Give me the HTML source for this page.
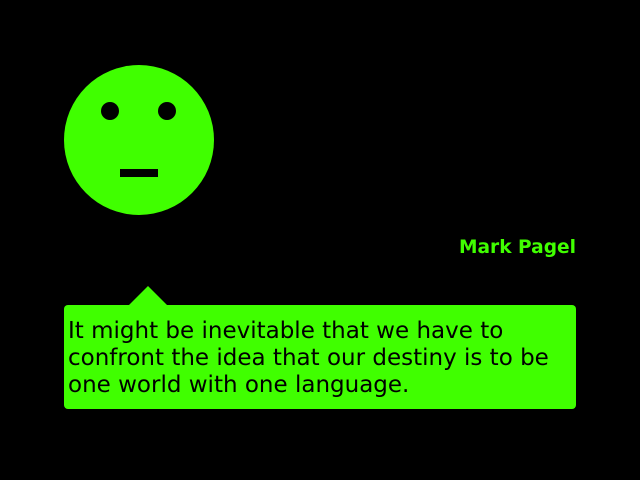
<!DOCTYPE html>
<html><head><style>
html,body{margin:0;padding:0;background:#000;width:640px;height:480px;overflow:hidden;position:relative;font-family:"DejaVu Sans","Liberation Sans",sans-serif}
.face{position:absolute;left:64px;top:65px;width:150px;height:150px;border-radius:50%;background:#40ff00}
.eye{position:absolute;width:18px;height:18px;border-radius:50%;background:#000;top:37px}
.mouth{position:absolute;left:56px;top:104px;width:38px;height:8px;background:#000}
.name{position:absolute;right:64px;top:235px;color:#40ff00;font-weight:bold;font-size:18.6px;line-height:26px}
.tri{position:absolute;left:129px;top:286px;width:0;height:0;border-left:19.5px solid transparent;border-right:19.5px solid transparent;border-bottom:19px solid #40ff00}
.bub{position:absolute;left:64px;top:305px;width:508px;height:104px;padding-left:4px;background:#40ff00;border-radius:4px;color:#000;font-size:23px;line-height:27px}
.bub div{padding-top:13px;white-space:nowrap}
</style></head><body>
<div class="face"><div class="eye" style="left:37px"></div><div class="eye" style="left:94px"></div><div class="mouth"></div></div>
<div class="name">Mark Pagel</div>
<div class="tri"></div>
<div class="bub"><div>It might be inevitable that we have to<br>confront the idea that our destiny is to be<br>one world with one language.</div></div>
</body></html>
